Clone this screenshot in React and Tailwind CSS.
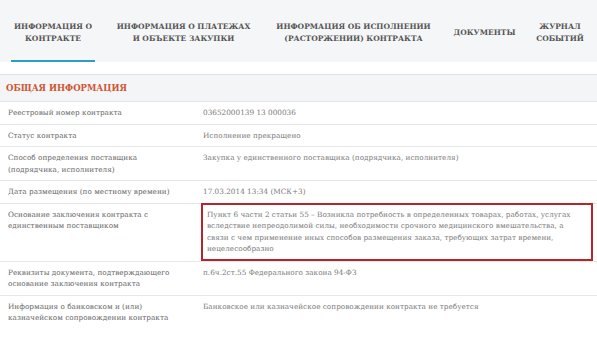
const tabs = [
  { lines: ['Информация о', 'контракте'], w: 'w-[84px]', active: true },
  { lines: ['Информация о платежах', 'и объекте закупки'], w: 'w-[177px]' },
  { lines: ['Информация об исполнении', '(расторжении) контракта'], w: 'w-[163px]' },
  { lines: ['Документы'], w: 'w-[99px]' },
  { lines: ['Журнал', 'событий'], w: 'w-[52px]' },
]

const rows = [
  { label: ['Реестровый номер контракта'], value: ['03652000139 13 000036'] },
  { label: ['Статус контракта'], value: ['Исполнение прекращено'] },
  {
    label: ['Способ определения поставщика', '(подрядчика, исполнителя)'],
    value: ['Закупка у единственного поставщика (подрядчика, исполнителя)'],
  },
  { label: ['Дата размещения (по местному времени)'], value: ['17.03.2014 13:34 (МСК+3)'] },
  {
    label: ['Основание заключения контракта с', 'единственным поставщиком'],
    value: [
      'Пункт 6 части 2 статьи 55 – Возникла потребность в определенных товарах, работах, услугах',
      'вследствие непреодолимой силы, необходимости срочного медицинского вмешательства, а',
      'связи с чем применение иных способов размещения заказа, требующих затрат времени,',
      'нецелесообразно',
    ],
    marked: true,
  },
  {
    label: ['Реквизиты документа, подтверждающего', 'основание заключения контракта'],
    value: ['п.6ч.2ст.55 Федерального закона 94-ФЗ'],
  },
  {
    label: ['Информация о банковском и (или)', 'казначейском сопровождении контракта'],
    value: ['Банковское или казначейское сопровождении контракта не требуется'],
    last: true,
  },
]

export default function App() {
  return (
    <main className="w-[597px] h-[345px] overflow-hidden bg-white font-[family-name:'DejaVu_Serif',serif]">
      <nav className="flex h-[62px] bg-[#f5f6f8] pl-[11px]">
        {tabs.map((tab) => (
          <div
            key={tab.lines[0]}
            className={`${tab.w} flex flex-none items-center justify-center border-b-2 pt-[6px] ${
              tab.active ? 'border-[#2e9cc4]' : 'border-transparent'
            }`}
          >
            <p className="whitespace-nowrap text-center text-[7.5px] font-bold uppercase leading-[12px] text-[#555]">
              {tab.lines.map((l) => (
                <span key={l} className="block">{l}</span>
              ))}
            </p>
          </div>
        ))}
      </nav>

      <section className="mt-[12px] border-t border-[#dfe1e4]">
        <h2 className="flex h-[27px] items-center border-b border-[#e4e5e7] bg-[#f4f5f7] px-[6px] pt-[1px] text-[8.5px] font-bold uppercase text-[#cf5631]">
          Общая информация
        </h2>

        {rows.map((row) => (
          <div
            key={row.label[0]}
            className={`flex text-[7.3px] leading-[11.5px] ${row.last ? '' : 'border-b border-[#e6e7e9]'}`}
          >
            <div className="w-[195px] flex-none py-[5px] pl-[8px] text-[#666]">
              {row.label.map((l) => (
                <span key={l} className="block whitespace-nowrap">{l}</span>
              ))}
            </div>
            <div
              className={`flex-1 text-[#7a7a7a] ${
                row.marked
                  ? 'mt-[-1px] mr-[4px] ml-[6px] border-2 border-[#b3262c] py-[4px] pl-[4px]'
                  : 'py-[5px] pl-[8px]'
              }`}
            >
              {row.value.map((l) => (
                <span key={l} className="block whitespace-nowrap">{l}</span>
              ))}
            </div>
          </div>
        ))}
      </section>
    </main>
  )
}
